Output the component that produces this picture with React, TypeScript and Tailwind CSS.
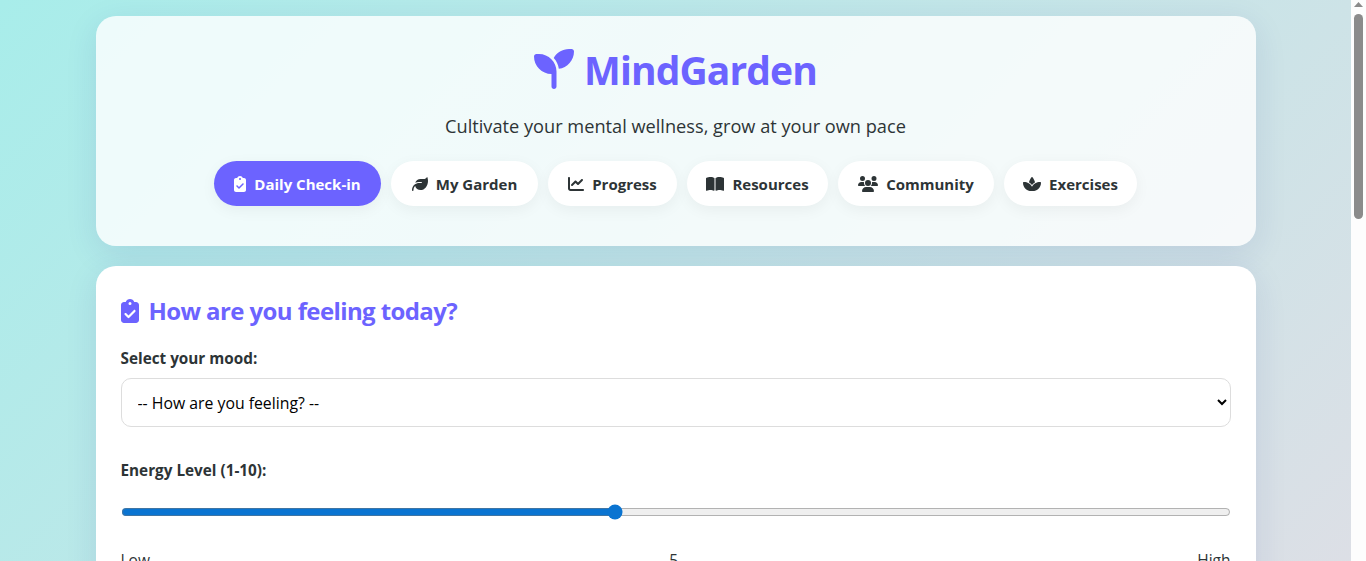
import { FaSeedling, FaClipboardCheck, FaLeaf, FaChartLine, FaBookOpen, FaUsers, FaSpa } from 'react-icons/fa6';

const tabs = [
  { label: 'Daily Check-in', icon: FaClipboardCheck, iconWidth: 'w-[12px]', width: 'w-[167px]', active: true },
  { label: 'My Garden', icon: FaLeaf, iconWidth: 'w-4', width: 'w-[147px]' },
  { label: 'Progress', icon: FaChartLine, iconWidth: 'w-4', width: 'w-[129px]' },
  { label: 'Resources', icon: FaBookOpen, iconWidth: 'w-[18px]', width: 'w-[141px]' },
  { label: 'Community', icon: FaUsers, iconWidth: 'w-5', width: 'w-[156px]' },
  { label: 'Exercises', icon: FaSpa, iconWidth: 'w-[18px]', width: 'w-[133px]' },
];

export default function App() {
  return (
    <div className="flex h-screen overflow-hidden font-['Open_Sans',sans-serif] text-[#2d3436]">
      <div className="min-w-0 flex-1 overflow-hidden">
        <div className="min-h-[1790px] bg-[linear-gradient(135deg,#a8edea_0%,#fed6e3_100%)] p-4">
          <div className="mx-auto flex max-w-[1160px] flex-col gap-5">
            {/* Header */}
            <header className="flex h-[230px] flex-col items-center rounded-[20px] bg-white/80 pt-[24px] shadow-[0_8px_32px_rgba(31,38,135,0.1)]">
              <h1 className="flex items-center gap-[10px] text-[39px] leading-[60px] font-bold tracking-[-0.9px] text-[#6c63ff]">
                <FaSeedling className="mb-[2px] h-10 w-10" />
                MindGarden
              </h1>
              <p className="mt-[14px] text-[18.2px] leading-[24px]">Cultivate your mental wellness, grow at your own pace</p>
              <nav className="mt-[23px] flex gap-[10px]">
                {tabs.map((tab) => (
                  <button
                    key={tab.label}
                    className={`flex h-[45px] items-center justify-center gap-2 rounded-[25px] pt-px text-[15px] font-bold shadow-[0_4px_15px_rgba(0,0,0,0.05)] ${tab.width} ${
                      tab.active ? 'bg-[#6c63ff] text-white' : 'bg-white text-[#2d3436]'
                    }`}
                  >
                    <tab.icon className={`h-4 ${tab.iconWidth}`} />
                    {tab.label}
                  </button>
                ))}
              </nav>
            </header>

            {/* Check-in card */}
            <main className="rounded-[20px] bg-white px-[25px] pt-[25px] pb-10 shadow-[0_8px_32px_rgba(31,38,135,0.1)]">
              <h2 className="flex items-center gap-[10px] text-[24px] leading-[40px] font-bold tracking-[-0.6px] text-[#6c63ff]">
                <FaClipboardCheck className="h-6 w-[18px]" />
                How are you feeling today?
              </h2>
              <label className="mt-[15px] block text-[15.3px] leading-[24px] font-bold">Select your mood:</label>
              <select className="mt-[8px] h-[49px] w-full rounded-[10px] border border-[#dddddd] bg-white px-3 text-[15.8px] text-black">
                <option>-- How are you feeling? --</option>
              </select>
              <label className="mt-[31px] block text-[15.3px] leading-[24px] font-bold">Energy Level (1-10):</label>
              <input type="range" min={1} max={10} defaultValue={5} className="mt-[22px] block w-full accent-[#0a74d1]" />
              <div className="mt-[30px] flex justify-between text-[15.5px] leading-[20px]">
                <span>Low</span>
                <span>5</span>
                <span>High</span>
              </div>
            </main>
          </div>
        </div>
      </div>

      {/* Scrollbar as seen in the window */}
      <aside className="flex w-[15px] flex-none flex-col items-center bg-[#fdfdfd] pt-[2px]">
        <svg width="9" height="5" viewBox="0 0 9 5" className="flex-none">
          <polygon points="4.5,0 9,5 0,5" fill="#8b8b8b" />
        </svg>
        <div className="mt-[7px] h-[205px] w-[9px] rounded-[5px] bg-[#8b8b8b]" />
      </aside>
    </div>
  );
}
